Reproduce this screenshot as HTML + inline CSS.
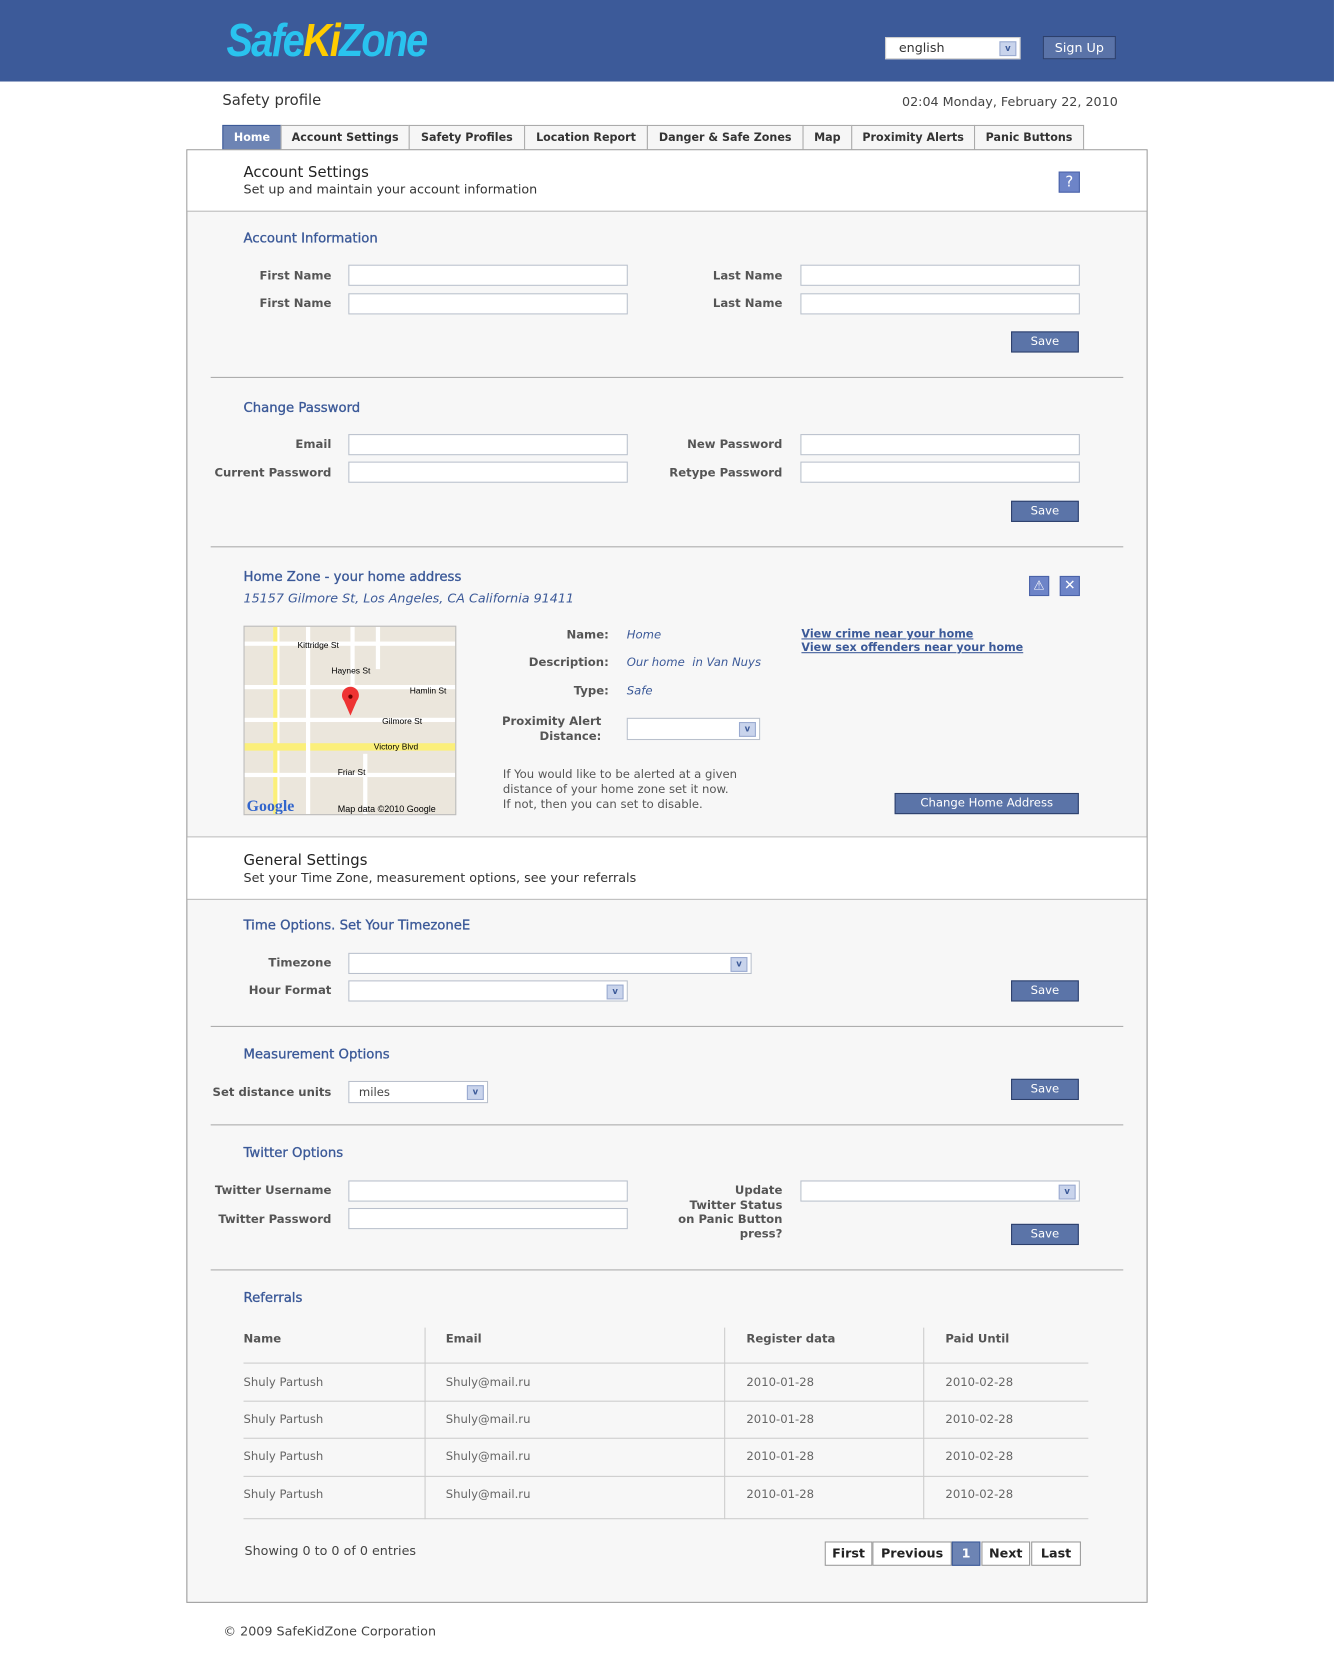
<!DOCTYPE html>
<html><head><meta charset="utf-8"><style>
html,body{margin:0;padding:0;background:#fff;width:1334px;height:1660px;overflow:hidden}
#w{position:absolute;left:0;top:0;width:1260px;height:1568px;transform:scale(1.0587);transform-origin:0 0;font-family:"DejaVu Sans","Liberation Sans",sans-serif;font-size:11px;color:#333}
#w div,#w span,#w a{position:absolute;white-space:nowrap}
.hd{left:0;top:0;width:1260px;height:77px;background:#3c5a99}
.box{left:176px;top:141px;width:906px;height:1371px;border:1px solid #999;background:#f7f7f7}
.wb{left:177px;width:906px;background:#fff}
.hr{left:199px;width:862px;height:0;border-top:1px solid #aaa}
.hl{left:177px;width:906px;height:0;border-top:1px solid #bbb}
.st{color:#3b5998;font-size:12.5px;-webkit-text-stroke:0.3px #3b5998}
.lb{font-weight:bold;color:#555;text-align:right;width:130px}
.in{width:262px;height:18px;border:1px solid #b9c0cc;background:#fff}
.btn{width:62px;height:18px;border:1px solid #2c3f6b;background:#5b74a8;color:#fff;text-align:center;line-height:18px;font-size:11px}
.dd{width:14px;height:12px;background:#c9d4ec;border:1px solid #9aaad0;color:#3b5998;font-size:8px;font-weight:bold;text-align:center;line-height:12px;top:3px;right:3px}
.tab{top:118px;height:22px;border:1px solid #aaa;background:#f6f6f6;font-weight:bold;font-size:10.5px;line-height:22px;text-align:center;color:#333}
.th{font-weight:bold;color:#555}
.td{color:#666}
.vl{width:0;border-left:1px solid #ccc;top:1254px;height:181px}
.rl{left:230px;width:798px;height:0;border-top:1px solid #ccc}
.pg{top:1456px;height:21px;border:1px solid #999;background:#fff;font-weight:bold;line-height:21px;text-align:center;color:#222;font-size:12px}
</style></head><body><div id="w">
<div class="hd"></div>
<div style="left:214px;top:14px;font-family:'Liberation Sans',sans-serif;font-weight:bold;font-style:italic;font-size:44px;color:#29c3ef;letter-spacing:-2px;transform:scaleX(.85);transform-origin:0 0">Safe<span style="position:static;color:#ffcc00">Ki</span>Zone</div>
<div style="left:836px;top:35px;width:126px;height:19px;border:1px solid #ccc;background:#fff"><span style="left:12px;top:2px;font-size:12px;color:#333">english</span><div class="dd">v</div></div>
<div style="left:985px;top:34px;width:67px;height:20px;border:1px solid #2c3f6b;background:#5a73a8;color:#fff;font-size:12px;text-align:center;line-height:20px">Sign Up</div>
<div style="left:210px;top:87px;font-size:14px;color:#333">Safety profile</div>
<div style="left:852px;top:89px;font-size:12px;color:#444">02:04 Monday, February 22, 2010</div>
<div class="tab" style="left:210px;width:54px;background:#6d84b4;color:#fff;border-color:#3b5998">Home</div>
<div class="tab" style="left:265px;width:120px">Account Settings</div>
<div class="tab" style="left:386px;width:108px">Safety Profiles</div>
<div class="tab" style="left:495px;width:115px">Location Report</div>
<div class="tab" style="left:611px;width:146px">Danger &amp; Safe Zones</div>
<div class="tab" style="left:758px;width:45px">Map</div>
<div class="tab" style="left:804px;width:115px">Proximity Alerts</div>
<div class="tab" style="left:920px;width:102px">Panic Buttons</div>
<div class="box"></div>
<div class="wb" style="top:142px;height:57px"></div>
<div class="hl" style="top:199px"></div>
<div style="left:230px;top:155px;font-size:14px;color:#222">Account Settings</div>
<div style="left:230px;top:172px;font-size:12px;color:#333">Set up and maintain your account information</div>
<div style="left:1000px;top:162px;width:18px;height:18px;background:#6d84c8;border:1px solid #4a62a8;color:#fff;text-align:center;line-height:18px;font-size:14px">?</div>

<div class="st" style="left:230px;top:217px">Account Information</div>
<div class="lb" style="left:183px;top:254px">First Name</div><div class="in" style="left:329px;top:250px"></div>
<div class="lb" style="left:183px;top:280px">First Name</div><div class="in" style="left:329px;top:277px"></div>
<div class="lb" style="left:609px;top:254px">Last Name</div><div class="in" style="left:756px;top:250px"></div>
<div class="lb" style="left:609px;top:280px">Last Name</div><div class="in" style="left:756px;top:277px"></div>
<div class="btn" style="left:955px;top:313px">Save</div>
<div class="hr" style="top:356px"></div>

<div class="st" style="left:230px;top:377px">Change Password</div>
<div class="lb" style="left:183px;top:413px">Email</div><div class="in" style="left:329px;top:410px"></div>
<div class="lb" style="left:183px;top:440px">Current Password</div><div class="in" style="left:329px;top:436px"></div>
<div class="lb" style="left:609px;top:413px">New Password</div><div class="in" style="left:756px;top:410px"></div>
<div class="lb" style="left:609px;top:440px">Retype Password</div><div class="in" style="left:756px;top:436px"></div>
<div class="btn" style="left:955px;top:473px">Save</div>
<div class="hr" style="top:516px"></div>

<div class="st" style="left:230px;top:537px">Home Zone - your home address</div>
<div style="left:230px;top:558px;font-style:italic;color:#3b5998;font-size:12px">15157 Gilmore St, Los Angeles, CA California 91411</div>
<div style="left:972px;top:544px;width:17px;height:17px;background:#6d84c8;border:1px solid #4a62a8;color:#fff;text-align:center;line-height:17px;font-size:12px">⚠</div>
<div style="left:1001px;top:544px;width:17px;height:17px;background:#6d84c8;border:1px solid #4a62a8;color:#fff;text-align:center;line-height:17px;font-size:13px">✕</div>
<div style="left:230px;top:591px;width:199px;height:177px;border:1px solid #bbb;background:#ebe6dc;overflow:hidden">
<svg width="199" height="177" style="position:absolute;left:0;top:0">
<rect x="27" y="0" width="6" height="177" fill="#fff"/>
<rect x="27" y="0" width="4" height="177" fill="#fbef7a"/>
<rect x="0" y="110" width="199" height="7" fill="#fbef7a"/>
<rect x="0" y="14" width="199" height="4" fill="#fff"/><rect x="0" y="86" width="199" height="4" fill="#fff"/>
<rect x="0" y="55" width="199" height="4" fill="#fff"/><rect x="58" y="0" width="4" height="177" fill="#fff"/>
<rect x="100" y="0" width="4" height="60" fill="#fff"/><rect x="124" y="0" width="4" height="40" fill="#fff"/>
<rect x="112" y="120" width="4" height="57" fill="#fff"/><rect x="0" y="138" width="199" height="4" fill="#fff"/>
<path d="M100 84 L94 70 A8 8 0 1 1 106 70 Z" fill="#e33"/><circle cx="100" cy="66" r="2" fill="#600"/>
<text x="50" y="20" font-size="8" font-family="Liberation Sans">Kittridge St</text>
<text x="82" y="44" font-size="8" font-family="Liberation Sans">Haynes St</text>
<text x="156" y="63" font-size="8" font-family="Liberation Sans">Hamlin St</text>
<text x="130" y="92" font-size="8" font-family="Liberation Sans">Gilmore St</text>
<text x="122" y="116" font-size="8" font-family="Liberation Sans">Victory Blvd</text>
<text x="88" y="140" font-size="8" font-family="Liberation Sans">Friar St</text>
<text x="2" y="174" font-size="15" font-weight="bold" fill="#3366cc" font-family="Liberation Serif">Google</text>
<text x="88" y="175" font-size="8.5" font-family="Liberation Sans">Map data ©2010 Google</text>
</svg></div>
<div class="lb" style="left:445px;top:593px">Name:</div><div style="left:592px;top:593px;font-style:italic;color:#3b5998">Home</div>
<div class="lb" style="left:445px;top:619px">Description:</div><div style="left:592px;top:619px;font-style:italic;color:#3b5998">Our home&nbsp; in Van Nuys</div>
<div class="lb" style="left:445px;top:646px">Type:</div><div style="left:592px;top:646px;font-style:italic;color:#3b5998">Safe</div>
<div class="lb" style="left:440px;top:675px;line-height:14px;white-space:normal;width:128px">Proximity Alert<br>&nbsp; &nbsp;Distance:</div>
<div style="left:592px;top:678px;width:124px;height:19px;border:1px solid #b9c0cc;background:#fff"><div class="dd">v</div></div>
<div style="left:475px;top:725px;line-height:14px;color:#555">If You would like to be alerted at a given<br>distance of your home zone set it now.<br>If not, then you can set to disable.</div>
<div style="left:757px;top:593px;font-weight:bold;color:#3b5998;text-decoration:underline;font-size:10.5px;line-height:13px">View crime near your home<br>View sex offenders near your home</div>
<div class="btn" style="left:845px;top:749px;width:172px">Change Home Address</div>

<div class="hl" style="top:790px"></div>
<div class="wb" style="top:791px;height:58px"></div>
<div class="hl" style="top:849px"></div>
<div style="left:230px;top:805px;font-size:14px;color:#222">General Settings</div>
<div style="left:230px;top:822px;font-size:12px;color:#333">Set your Time Zone, measurement options, see your referrals</div>

<div class="st" style="left:230px;top:866px">Time Options. Set Your TimezoneE</div>
<div class="lb" style="left:183px;top:903px">Timezone</div>
<div style="left:329px;top:900px;width:379px;height:18px;border:1px solid #b9c0cc;background:#fff"><div class="dd">v</div></div>
<div class="lb" style="left:183px;top:929px">Hour Format</div>
<div style="left:329px;top:926px;width:262px;height:18px;border:1px solid #b9c0cc;background:#fff"><div class="dd">v</div></div>
<div class="btn" style="left:955px;top:926px">Save</div>
<div class="hr" style="top:969px"></div>

<div class="st" style="left:230px;top:988px">Measurement Options</div>
<div class="lb" style="left:183px;top:1025px">Set distance units</div>
<div style="left:329px;top:1021px;width:130px;height:19px;border:1px solid #b9c0cc;background:#fff"><span style="left:9px;top:3px;color:#444">miles</span><div class="dd">v</div></div>
<div class="btn" style="left:955px;top:1019px">Save</div>
<div class="hr" style="top:1062px"></div>

<div class="st" style="left:230px;top:1081px">Twitter Options</div>
<div class="lb" style="left:183px;top:1118px">Twitter Username</div><div class="in" style="left:329px;top:1115px"></div>
<div class="lb" style="left:183px;top:1145px">Twitter Password</div><div class="in" style="left:329px;top:1141px"></div>
<div class="lb" style="left:609px;top:1118px;line-height:13.5px;white-space:normal">Update<br>Twitter Status<br>on Panic Button<br>press?</div>
<div style="left:756px;top:1115px;width:262px;height:18px;border:1px solid #b9c0cc;background:#fff"><div class="dd">v</div></div>
<div class="btn" style="left:955px;top:1156px">Save</div>
<div class="hr" style="top:1199px"></div>

<div class="st" style="left:230px;top:1218px">Referrals</div>
<div class="vl" style="left:401px"></div><div class="vl" style="left:684px"></div><div class="vl" style="left:872px"></div>
<div class="th" style="left:230px;top:1258px">Name</div><div class="th" style="left:421px;top:1258px">Email</div><div class="th" style="left:705px;top:1258px">Register data</div><div class="th" style="left:893px;top:1258px">Paid Until</div>
<div class="rl" style="top:1287px"></div><div class="rl" style="top:1323px"></div><div class="rl" style="top:1358px"></div><div class="rl" style="top:1394px"></div><div class="rl" style="top:1434px"></div>
<div class="td" style="left:230px;top:1299px">Shuly Partush</div><div class="td" style="left:421px;top:1299px">Shuly@mail.ru</div><div class="td" style="left:705px;top:1299px">2010-01-28</div><div class="td" style="left:893px;top:1299px">2010-02-28</div>
<div class="td" style="left:230px;top:1334px">Shuly Partush</div><div class="td" style="left:421px;top:1334px">Shuly@mail.ru</div><div class="td" style="left:705px;top:1334px">2010-01-28</div><div class="td" style="left:893px;top:1334px">2010-02-28</div>
<div class="td" style="left:230px;top:1369px">Shuly Partush</div><div class="td" style="left:421px;top:1369px">Shuly@mail.ru</div><div class="td" style="left:705px;top:1369px">2010-01-28</div><div class="td" style="left:893px;top:1369px">2010-02-28</div>
<div class="td" style="left:230px;top:1405px">Shuly Partush</div><div class="td" style="left:421px;top:1405px">Shuly@mail.ru</div><div class="td" style="left:705px;top:1405px">2010-01-28</div><div class="td" style="left:893px;top:1405px">2010-02-28</div>
<div style="left:231px;top:1458px;font-size:12px;color:#444">Showing 0 to 0 of 0 entries</div>
<div class="pg" style="left:779px;width:43px">First</div>
<div class="pg" style="left:824px;width:73px">Previous</div>
<div class="pg" style="left:899px;width:25px;background:#6d84b4;color:#fff;border-color:#3b5998">1</div>
<div class="pg" style="left:927px;width:44px">Next</div>
<div class="pg" style="left:974px;width:45px">Last</div>
<div style="left:211px;top:1534px;font-size:12px;color:#444">© 2009 SafeKidZone Corporation</div>
</div></body></html>
